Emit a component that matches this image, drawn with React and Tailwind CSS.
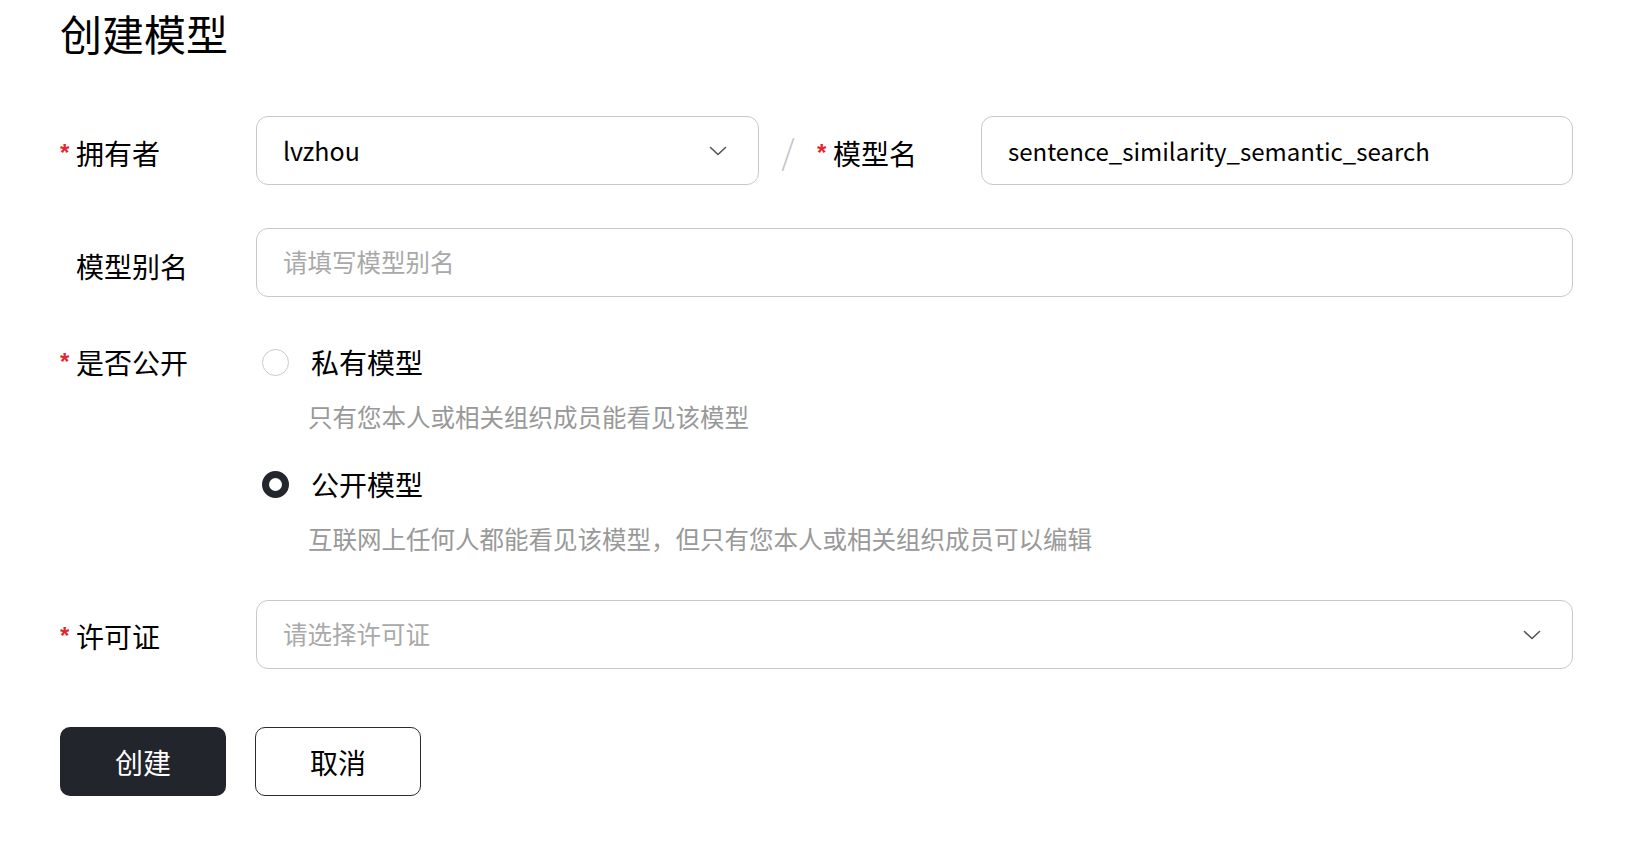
import React from "react";

const font = { fontFamily: '"Noto Sans CJK SC", "Noto Sans", sans-serif' };

function Chevron() {
  return (
    <svg width="18" height="10" viewBox="0 0 18 10" fill="none">
      <polyline points="1.5,1.5 9,8.5 16.5,1.5" stroke="#555" strokeWidth="1.6" strokeLinecap="round" strokeLinejoin="round" />
    </svg>
  );
}

function Label({ required, children, className = "" }) {
  return (
    <div className={"flex items-center text-[28px] leading-[40px] text-black " + className}>
      <span className="w-[16px] text-[24px] font-bold leading-[40px] text-[#e3262f]" style={{ fontFamily: '"Liberation Sans", sans-serif' }}>
        {required ? "*" : ""}
      </span>
      <span>{children}</span>
    </div>
  );
}

export default function App() {
  return (
    <div className="min-h-[852px] bg-white pl-[60px] pr-[69px]" style={font}>
      <h1 className="h-[66px] text-[42px] leading-[66px] font-normal text-black">创建模型</h1>

      {/* Row 1 */}
      <div className="mt-[50px] flex items-start">
        <Label required className="w-[196px] mt-[17px] shrink-0">拥有者</Label>
        <div className="w-[503px] h-[69px] shrink-0 rounded-[12px] border border-[#c9c9c9] pl-[26px] pr-[31px] flex items-center justify-between">
          <span className="text-[25px] text-black">lvzhou</span>
          <Chevron />
        </div>
        <div className="w-[58px] shrink-0 h-[69px] flex items-center justify-center text-[34px] text-[#c4c4c4] font-light">/</div>
        <Label required className="w-[164px] mt-[17px] shrink-0">模型名</Label>
        <div className="flex-1 h-[69px] rounded-[12px] border border-[#c9c9c9] pl-[26px] flex items-center">
          <span className="text-[24px] text-black">sentence_similarity_semantic_search</span>
        </div>
      </div>

      {/* Row 2 */}
      <div className="mt-[43px] flex items-start">
        <Label className="w-[196px] mt-[18px] shrink-0">模型别名</Label>
        <div className="flex-1 h-[69px] rounded-[12px] border border-[#c9c9c9] pl-[26px] flex items-center">
          <span className="text-[24.5px] text-[#a9a9a9]">请填写模型别名</span>
        </div>
      </div>

      {/* Row 3 */}
      <div className="mt-[45px] flex items-start">
        <Label required className="w-[196px] shrink-0">是否公开</Label>
        <div className="flex flex-col pl-[6px]">
          <div className="flex items-center h-[40px]">
            <span className="w-[27px] h-[27px] rounded-full border-[1.5px] border-[#c9c9c9] bg-white" />
            <span className="ml-[22px] text-[28px] leading-[40px] text-black">私有模型</span>
          </div>
          <div className="mt-[15px] ml-[46px] text-[24.5px] leading-[40px] text-[#999999]">只有您本人或相关组织成员能看见该模型</div>
          <div className="mt-[27px] flex items-center h-[40px]">
            <span className="w-[27px] h-[27px] rounded-full border-[7px] border-[#23262d] bg-white" />
            <span className="ml-[22px] text-[28px] leading-[40px] text-black">公开模型</span>
          </div>
          <div className="mt-[15px] ml-[46px] text-[24.5px] leading-[40px] text-[#999999]">互联网上任何人都能看见该模型，但只有您本人或相关组织成员可以编辑</div>
        </div>
      </div>

      {/* Row 4 */}
      <div className="mt-[41px] flex items-start">
        <Label required className="w-[196px] mt-[16px] shrink-0">许可证</Label>
        <div className="flex-1 h-[69px] rounded-[12px] border border-[#c9c9c9] pl-[26px] pr-[31px] flex items-center justify-between">
          <span className="text-[24.5px] text-[#a9a9a9]">请选择许可证</span>
          <Chevron />
        </div>
      </div>

      {/* Buttons */}
      <div className="mt-[58px] flex gap-[29px]">
        <button className="w-[166px] h-[69px] rounded-[10px] bg-[#22252c] text-white text-[28px]" style={font}>创建</button>
        <button className="w-[166px] h-[69px] rounded-[10px] border border-[#2b2b2b] bg-white text-black text-[28px]" style={font}>取消</button>
      </div>
    </div>
  );
}
